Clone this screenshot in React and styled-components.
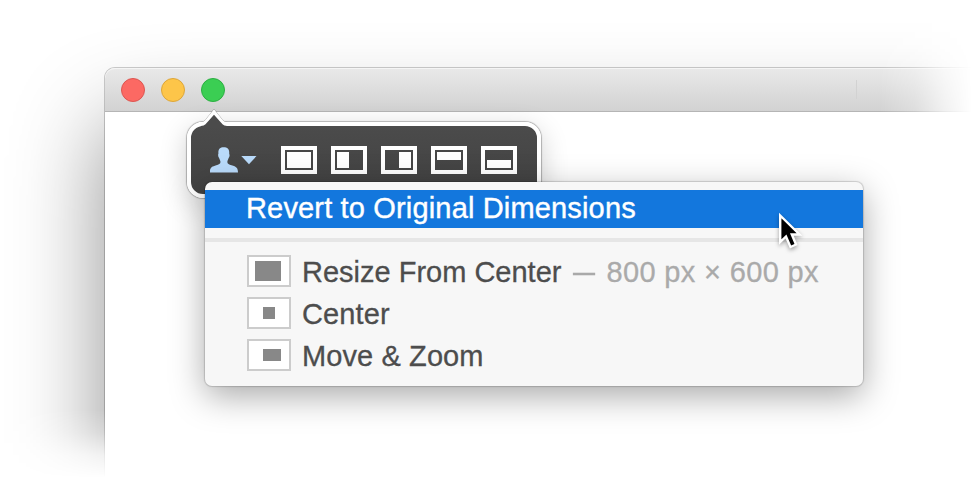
import React from "react";
import styled, { createGlobalStyle } from "styled-components";

const GlobalStyle = createGlobalStyle`
  * { box-sizing: border-box; }
  body { margin: 0; background: #fff; font-family: "Liberation Sans", Arial, sans-serif; }
`;

const Scene = styled.main`
  position: relative;
  width: 976px;
  height: 488px;
  overflow: hidden;
  background: #fff;
`;

const FadeRight = styled.div`
  height: 488px;
  overflow: hidden;
  mask-image: linear-gradient(to right, #000 880px, rgba(0, 0, 0, 0.75) 915px, rgba(0, 0, 0, 0.3) 945px, transparent 972px);
`;

const FadeBottom = styled.div`
  height: 488px;
  padding: 68px 0 0 105px;
  mask-image: linear-gradient(to bottom, #000 410px, rgba(0, 0, 0, 0.72) 433px, rgba(0, 0, 0, 0.25) 455px, transparent 478px);
`;

const Window = styled.section`
  width: 1200px;
  height: 800px;
  border-radius: 10px;
  background: #fff;
  box-shadow: 0 0 0 1px rgba(0, 0, 0, 0.2), 0 56px 92px rgba(0, 0, 0, 0.44);
`;

const TitleBar = styled.header`
  display: flex;
  align-items: center;
  gap: 16px;
  height: 44px;
  padding: 0 16px;
  border-bottom: 1px solid #b5b5b5;
  border-radius: 10px 10px 0 0;
  background: linear-gradient(#e9e9e9, #d2d2d2);
  box-shadow: inset 0 1px #f5f5f5;
`;

const Light = styled.span`
  width: 24px;
  height: 24px;
  border: 1px solid ${(p) => p.$edge};
  border-radius: 50%;
  background: ${(p) => p.$color};
`;

const BarDivider = styled.span`
  width: 1px;
  height: 19px;
  margin-left: 615px;
  background: #d2d2d2;
`;

const Popover = styled.div`
  position: absolute;
  left: 187px;
  top: 122px;
  display: flex;
  align-items: flex-start;
  width: 354px;
  height: 76px;
  padding: 20px 20px 0 19px;
  border: 4px solid #fff;
  border-radius: 16px;
  background: linear-gradient(#4b4b4b, #414141);
  box-shadow: 0 0 1px 1px rgba(0, 0, 0, 0.26), 0 8px 28px rgba(0, 0, 0, 0.2);
`;

const Arrow = styled.svg`
  position: absolute;
  left: 8px;
  top: -18px;
`;

const LayoutList = styled.div`
  display: flex;
  gap: 14px;
  margin-left: 24px;
`;

const LayoutButton = styled.span`
  display: flex;
  justify-content: ${(p) => p.$justify || "flex-start"};
  align-items: ${(p) => p.$align || "flex-start"};
  width: 36px;
  height: 28px;
  padding: 2px;
  border: 4px solid #fff;
`;

const LayoutFill = styled.span`
  width: ${(p) => p.$w}px;
  height: ${(p) => p.$h}px;
  background: #fff;
`;

const Menu = styled.nav`
  position: absolute;
  left: 205px;
  top: 182px;
  width: 658px;
  height: 204px;
  padding-top: 8px;
  border-radius: 7px;
  background: #f7f7f7;
  box-shadow: 0 0 1px 1px rgba(0, 0, 0, 0.16), 0 10px 34px rgba(0, 0, 0, 0.34);
`;

const SelectedItem = styled.div`
  height: 38px;
  padding-left: 41px;
  color: #fff;
  background: #1377dd;
  font-size: 29px;
  line-height: 37px;
  letter-spacing: 0.16px;
  white-space: nowrap;
  -webkit-text-stroke: 0.4px;
`;

const Separator = styled.div`
  height: 4px;
  margin: 10px 0 8px;
  background: #e6e6e6;
`;

const Item = styled.div`
  display: flex;
  align-items: center;
  height: 42px;
  padding-left: 42px;
  color: #4d4d4d;
  font-size: 29px;
  line-height: 40px;
  white-space: nowrap;
  -webkit-text-stroke: 0.3px;
`;

const Label = styled.span`
  padding-top: 2px;
  margin-left: 11px;
  letter-spacing: ${(p) => p.$track || 0}px;
`;

const Dash = styled.span`
  display: inline-block;
  width: 22px;
  margin: 0 11px 0 12px;
  padding-top: 2px;
  color: #aaa;
  transform: scaleX(0.76);
  transform-origin: left center;
`;

const Detail = styled.span`
  padding-top: 2px;
  color: #aaa;
  letter-spacing: 0.35px;
`;

const Thumb = styled.span`
  width: 44px;
  height: 32px;
  padding: ${(p) => p.$pad};
  border: 2px solid #ccc;
  background: #fff;
`;

const ThumbFill = styled.span`
  display: block;
  width: ${(p) => p.$w}px;
  height: ${(p) => p.$h}px;
  background: #888;
`;

const Cursor = styled.svg`
  position: absolute;
  left: 776px;
  top: 210px;
  filter: drop-shadow(0 2px 2px rgba(0, 0, 0, 0.35));
`;

const layouts = [
  { w: 24, h: 16 },
  { w: 12, h: 16 },
  { w: 12, h: 16, justify: "flex-end" },
  { w: 24, h: 8 },
  { w: 24, h: 8, align: "flex-end" },
];

const actions = [
  { label: "Resize From Center", detail: "800 px × 600 px", pad: "4px 6px", w: 26, h: 20, track: 0 },
  { label: "Center", pad: "8px 14px", w: 12, h: 12, track: 0.1 },
  { label: "Move & Zoom", pad: "8px 14px", w: 18, h: 12, track: 0.1 },
];

export default function App() {
  return (
    <Scene>
      <GlobalStyle />
      <FadeRight>
        <FadeBottom>
          <Window>
            <TitleBar>
              <Light $color="#fc6963" $edge="#dc5651" />
              <Light $color="#fdc549" $edge="#dda63a" />
              <Light $color="#3bce53" $edge="#2caf42" />
              <BarDivider />
            </TitleBar>
          </Window>
        </FadeBottom>
      </FadeRight>

      <Popover>
        <Arrow width="30" height="20" viewBox="0 0 30 20">
          <path d="M1 14.500 Q4.500 14.500 6 12.500 L15 1.200 L24 12.500 Q25.500 14.500 29 14.500" fill="#fff" stroke="rgba(0,0,0,0.22)" strokeWidth="1" />
          <path d="M0 18 V14 H2 Q4.500 14 6.300 12.400 L15 1.700 L23.700 12.400 Q25.500 14 28 14 H30 V18 Z" fill="#fff" />
          <path d="M2 20 V18 Q5 17.800 6.500 16.200 L15 6.800 L23.500 16.200 Q25 17.800 28 18 V20 Z" fill="#4b4b4b" />
        </Arrow>
        <svg width="48" height="28" viewBox="0 0 48 28">
          <path
            fill="#b9dafa"
            d="M14 1C18 1 20 3 19.600 7.600C20.300 8.500 20 11 19 12C18.700 13.500 17.700 14.500 17.700 16C17.700 18 19.500 18.600 22 19.300C27 20.800 28.600 22 28.600 26.800H-0.200C-0.200 22 1.400 20.800 6.400 19.300C8.900 18.600 10.700 18 10.700 16C10.700 14.500 9.700 13.500 9.300 12C8.300 11 8 8.500 8.600 7.600C8.200 3 10 1 14 1Z"
          />
          <path fill="#b9dafa" d="M32 10H47.500L39.800 18.300Z" />
        </svg>
        <LayoutList>
          {layouts.map((item, i) => (
            <LayoutButton key={i} $justify={item.justify} $align={item.align}>
              <LayoutFill $w={item.w} $h={item.h} />
            </LayoutButton>
          ))}
        </LayoutList>
      </Popover>

      <Menu>
        <SelectedItem>Revert to Original Dimensions</SelectedItem>
        <Separator />
        {actions.map((item) => (
          <Item key={item.label}>
            <Thumb $pad={item.pad}>
              <ThumbFill $w={item.w} $h={item.h} />
            </Thumb>
            <Label $track={item.track}>{item.label}</Label>
            {item.detail && (
              <>
                <Dash>—</Dash>
                <Detail>{item.detail}</Detail>
              </>
            )}
          </Item>
        ))}
      </Menu>

      <Cursor width="32" height="42" viewBox="0 0 32 42">
        <path
          d="M4.200 5.500V32L10 26.500L14.500 37L20 34.500L15.800 24.500H23.500Z"
          fill="#000"
          stroke="#fff"
          strokeWidth="2.400"
        />
      </Cursor>
    </Scene>
  );
}
